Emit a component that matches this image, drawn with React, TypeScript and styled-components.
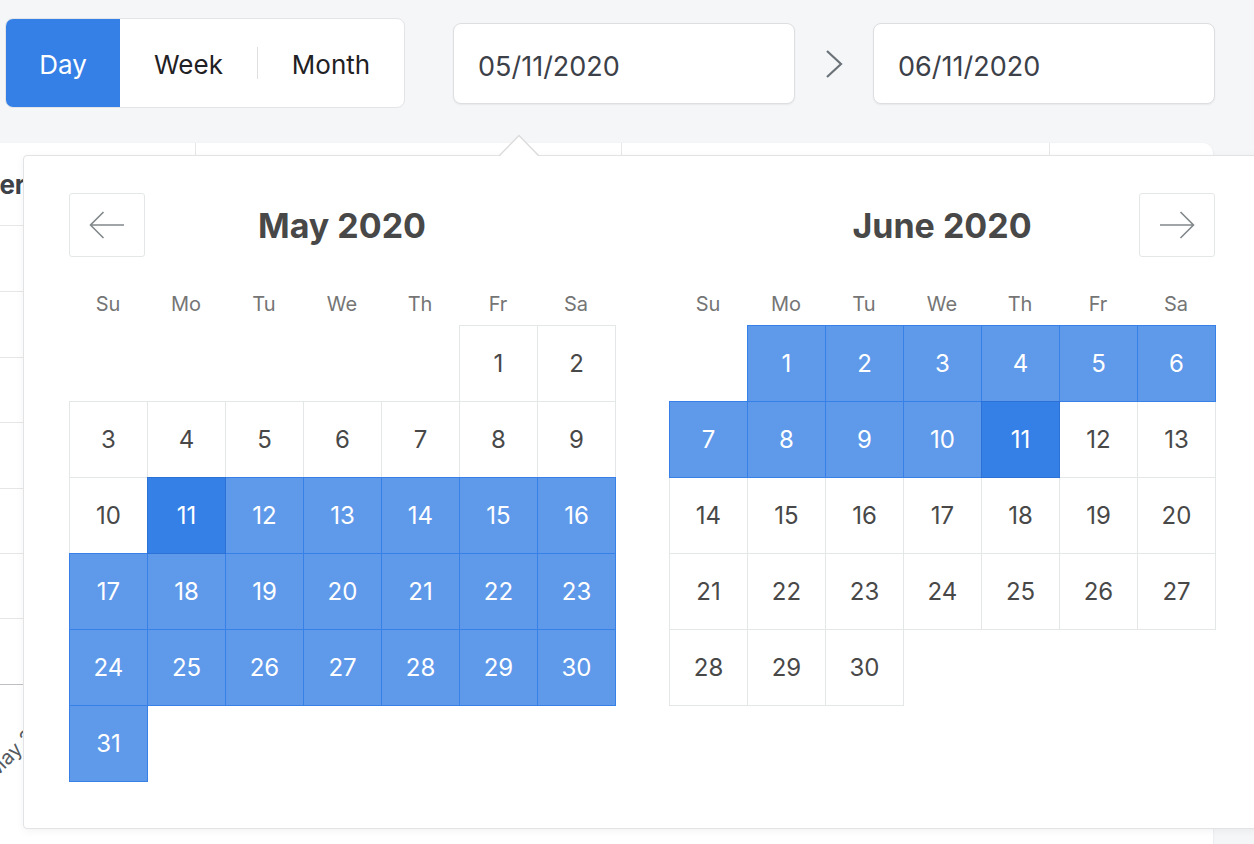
import styled, { createGlobalStyle, css } from "styled-components";

const GlobalStyle = createGlobalStyle`
  html, body {
    margin: 0;
    background: #f5f6f8;
  }
  body {
    font-family: Inter, "Noto Sans", "Liberation Sans", sans-serif;
    overflow: hidden;
  }
`;

const Page = styled.div`
  width: 1254px;
  height: 844px;
  overflow: hidden;
`;

const Toolbar = styled.div`
  display: flex;
  align-items: flex-start;
  padding: 18px 0 0 5px;
`;

const Segmented = styled.div`
  display: flex;
  align-items: stretch;
  box-sizing: border-box;
  width: 400px;
  height: 90px;
  background: #fff;
  border: 1px solid #e3e4e6;
  border-radius: 8px;
  overflow: hidden;
`;

const SegButton = styled.button<{ $active?: boolean; $width: number }>`
  width: ${({ $width }) => $width}px;
  border: 0;
  padding: 3px 0 0;
  background: ${({ $active }) => ($active ? "#3580e6" : "transparent")};
  color: ${({ $active }) => ($active ? "#fff" : "#1f2124")};
  font: 400 26px/1 Inter, "Noto Sans", sans-serif;
  cursor: pointer;
`;

const SegDivider = styled.span`
  width: 1px;
  height: 32px;
  align-self: center;
  background: #dedfe1;
`;

const Picker = styled.div`
  position: relative;
  display: flex;
  align-items: center;
  margin: 5px 0 0 48px;
`;

const DateInput = styled.div`
  box-sizing: border-box;
  width: 342px;
  height: 81px;
  padding: 5px 24px 0;
  display: flex;
  align-items: center;
  background: #fff;
  border: 1px solid #dcdee2;
  border-radius: 8px;
  box-shadow: 0 1px 2px rgba(0, 0, 0, 0.06);
  font-size: 27px;
  color: #3c4048;
`;

const Between = styled.div`
  width: 78px;
  display: flex;
  justify-content: center;
`;

const Card = styled.div`
  margin: 35px 0 0 -5px;
  width: 1218px;
  height: 720px;
  background: #fff;
  border-top-right-radius: 10px;
  box-shadow: 0 1px 3px rgba(0, 0, 0, 0.08);
`;

const CardHeader = styled.div`
  display: grid;
  grid-template-columns: 200px 426px 428px 1fr;
  height: 82px;
  border-bottom: 1px solid #e6e7e9;
`;

const HeaderCell = styled.div<{ $first?: boolean }>`
  display: flex;
  align-items: center;
  justify-content: ${({ $first }) => ($first ? "flex-start" : "center")};
  border-left: ${({ $first }) => ($first ? "0" : "1px solid #e6e7e9")};
  font-weight: 700;
  font-size: 26px;
  color: #3d4248;
  white-space: nowrap;
`;

const HeaderText = styled.span<{ $shift?: number }>`
  margin-left: ${({ $shift }) => $shift ?? 0}px;
`;

const Popover = styled.div`
  position: absolute;
  top: calc(100% + 51px);
  left: -430px;
  z-index: 2;
  box-sizing: border-box;
  width: 1238px;
  height: 674px;
  padding: 37px 45px 0;
  background: #fff;
  border: 1px solid #e2e3e5;
  border-radius: 4px;
  box-shadow: 0 2px 8px rgba(0, 0, 0, 0.05);
`;

const Caret = styled.svg`
  position: absolute;
  top: -22px;
  left: 474px;
`;

const Months = styled.div`
  display: flex;
  gap: 54px;
`;

const Month = styled.div`
  width: 546px;
`;

const Caption = styled.div`
  display: grid;
  grid-template-columns: 76px 1fr 76px;
  height: 64px;
  align-items: center;
`;

const Title = styled.div`
  grid-column: 2;
  grid-row: 1;
  text-align: center;
  font-weight: 700;
  font-size: 34px;
  color: #484848;
`;

const NavButton = styled.button<{ $side: "left" | "right" }>`
  grid-row: 1;
  grid-column: ${({ $side }) => ($side === "left" ? 1 : 3)};
  box-sizing: border-box;
  width: 76px;
  height: 64px;
  padding: 0;
  display: flex;
  align-items: center;
  justify-content: center;
  background: #fff;
  border: 1px solid #e4e7e7;
  border-radius: 3px;
  cursor: pointer;
`;

const Weekdays = styled.div`
  box-sizing: border-box;
  display: grid;
  grid-template-columns: repeat(7, 78px);
  height: 68px;
  padding-bottom: 9px;
  align-items: end;
`;

const Weekday = styled.div`
  text-align: center;
  font-size: 20px;
  line-height: 24px;
  color: #757575;
`;

const DayGrid = styled.div`
  display: grid;
  grid-template-columns: repeat(7, 78px);
  grid-auto-rows: 76px;
`;

type DayState = "empty" | "plain" | "range" | "edge";

const DayCell = styled.div<{ $state: DayState }>`
  position: relative;
  margin: 0 -1px -1px 0;
  display: flex;
  align-items: center;
  justify-content: center;
  font-size: 24px;
  color: #484848;
  background: #fff;
  border: 1px solid #e4e7e7;
  ${({ $state }) =>
    $state === "empty" &&
    css`
      border-color: transparent;
      background: transparent;
    `}
  ${({ $state }) =>
    $state === "range" &&
    css`
      z-index: 1;
      background: #5f99ea;
      border-color: #3680e8;
      color: #fff;
    `}
  ${({ $state }) =>
    $state === "edge" &&
    css`
      z-index: 2;
      background: #3580e6;
      border-color: #2c72d6;
      color: #fff;
    `}
`;

const WEEKDAYS = ["Su", "Mo", "Tu", "We", "Th", "Fr", "Sa"];

const months = [
  { name: "May 2020", start: 5, days: 31, month: 5 },
  { name: "June 2020", start: 1, days: 30, month: 6 },
];

const dayState = (month: number, day: number): DayState => {
  if ((month === 5 && day === 11) || (month === 6 && day === 11)) return "edge";
  if ((month === 5 && day > 11) || (month === 6 && day < 11)) return "range";
  return "plain";
};

const ArrowLeft = () => (
  <svg width="36" height="28" viewBox="0 0 36 28" fill="none">
    <path d="M1.5 14H35M14.5 1L1.5 14L14.5 27" stroke="#82888a" strokeWidth="1.6" />
  </svg>
);

const ArrowRight = () => (
  <svg width="36" height="28" viewBox="0 0 36 28" fill="none">
    <path d="M1 14H34.5M21.5 1L34.5 14L21.5 27" stroke="#82888a" strokeWidth="1.6" />
  </svg>
);

const Chevron = () => (
  <svg width="18" height="30" viewBox="0 0 18 30" fill="none">
    <path d="M2 2L16 15L2 28" stroke="#6b7379" strokeWidth="2.2" />
  </svg>
);

const Chart = () => (
  <svg width="1218" height="637" viewBox="0 0 1218 637">
    {[65, 131, 196, 262, 327, 392].map((y) => (
      <line key={y} x1="0" x2="1195" y1={y + 0.5} y2={y + 0.5} stroke="#e5e6e8" />
    ))}
    <line x1="0" x2="1195" y1="458.5" y2="458.5" stroke="#bdbfc2" />
    <text
      x="0"
      y="553"
      transform="rotate(-45 0 553)"
      fontSize="20"
      fill="#555a60"
      fontFamily="Inter, sans-serif"
    >
      May 21
    </text>
  </svg>
);

const App = () => {
  return (
    <Page>
      <GlobalStyle />
      <Toolbar>
        <Segmented>
          <SegButton $active $width={114}>
            Day
          </SegButton>
          <SegButton $width={137}>Week</SegButton>
          <SegDivider />
          <SegButton $width={146}>Month</SegButton>
        </Segmented>
        <Picker>
          <DateInput>05/11/2020</DateInput>
          <Between>
            <Chevron />
          </Between>
          <DateInput>06/11/2020</DateInput>
          <Popover>
            <Caret width="42" height="22" viewBox="0 0 42 22">
              <polyline points="1,22 21,1.5 41,22" fill="#fff" stroke="#dcdcdc" strokeWidth="1.5" />
            </Caret>
            <Months>
              {months.map((m, i) => (
                <Month key={m.name}>
                  <Caption>
                    {i === 0 ? (
                      <NavButton $side="left">
                        <ArrowLeft />
                      </NavButton>
                    ) : (
                      <NavButton $side="right">
                        <ArrowRight />
                      </NavButton>
                    )}
                    <Title>{m.name}</Title>
                  </Caption>
                  <Weekdays>
                    {WEEKDAYS.map((d) => (
                      <Weekday key={d}>{d}</Weekday>
                    ))}
                  </Weekdays>
                  <DayGrid>
                    {Array.from({ length: m.start }).map((_, k) => (
                      <DayCell key={`e${k}`} $state="empty" />
                    ))}
                    {Array.from({ length: m.days }).map((_, k) => (
                      <DayCell key={k} $state={dayState(m.month, k + 1)}>
                        {k + 1}
                      </DayCell>
                    ))}
                  </DayGrid>
                </Month>
              ))}
            </Months>
          </Popover>
        </Picker>
      </Toolbar>
      <Card>
        <CardHeader>
          <HeaderCell $first>
            <HeaderText $shift={-42}>Order</HeaderText>
          </HeaderCell>
          <HeaderCell>Revenue</HeaderCell>
          <HeaderCell>Visitors</HeaderCell>
          <HeaderCell>Sales</HeaderCell>
        </CardHeader>
        <Chart />
      </Card>
    </Page>
  );
};

export default App;
